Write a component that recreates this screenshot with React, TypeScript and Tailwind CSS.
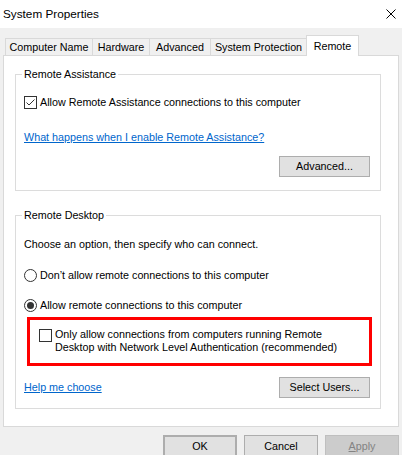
import React from "react";

function Checkbox({ checked }: { checked?: boolean }) {
  return (
    <span className="flex h-[13px] w-[13px] shrink-0 items-center justify-center border border-[#333333] bg-white">
      {checked && (
        <svg width="11" height="11" viewBox="0 0 11 11">
          <path d="M1.5 5.5 L4 8 L9.5 2.5" fill="none" stroke="#333333" strokeWidth="1" />
        </svg>
      )}
    </span>
  );
}

function Radio({ checked }: { checked?: boolean }) {
  return (
    <span className="flex h-[13px] w-[13px] shrink-0 items-center justify-center rounded-full border border-[#333333] bg-white">
      {checked && <span className="h-[7px] w-[7px] rounded-full bg-[#333333]" />}
    </span>
  );
}

function GroupBox({
  label,
  className,
  children,
}: {
  label: string;
  className: string;
  children: React.ReactNode;
}) {
  return (
    <div className={`relative ml-[11px] flex w-[366px] flex-col border border-[#dcdcdc] pl-[8px] ${className}`}>
      <span className="absolute -top-[7px] left-[6px] bg-white px-[2px] leading-[13px]">{label}</span>
      {children}
    </div>
  );
}

function Button({ children, className = "" }: { children: React.ReactNode; className?: string }) {
  return (
    <button
      className={`flex items-center justify-center border border-[#adadad] bg-[#e1e1e1] leading-[13px] text-black ${className}`}
    >
      {children}
    </button>
  );
}

const tabs = [
  { name: "Computer Name", w: "w-[88px]" },
  { name: "Hardware", w: "w-[58px]" },
  { name: "Advanced", w: "w-[62px]" },
  { name: "System Protection", w: "w-[97px]" },
];

export default function App() {
  return (
    <div className="flex h-[455px] w-[402px] flex-col overflow-hidden bg-[#f0f0f0] font-['Liberation_Sans',Arial,sans-serif] text-[10.75px] text-black">
      {/* Title bar */}
      <div className="flex h-[28px] shrink-0 items-center justify-between bg-white pl-[3px] pr-[6px]">
        <span className="text-[11.75px] leading-[14px]">System Properties</span>
        <svg width="10" height="10" viewBox="0 0 10 10">
          <path d="M0.5 0.5 L9.5 9.5 M9.5 0.5 L0.5 9.5" stroke="#000" strokeWidth="1" />
        </svg>
      </div>

      {/* Tabs */}
      <div className="flex h-[27px] shrink-0 items-end pl-[5px]">
        {tabs.map((t, i) => (
          <div
            key={t.name}
            className={`flex h-[17px] items-center justify-center border border-b-0 border-[#d9d9d9] bg-[#f0f0f0] leading-[13px] ${t.w} ${i > 0 ? "-ml-px" : ""}`}
          >
            {t.name}
          </div>
        ))}
        <div className="relative z-10 -mb-px -ml-px flex h-[21px] w-[53px] items-center justify-center border border-b-0 border-[#d9d9d9] bg-white leading-[13px]">
          Remote
        </div>
      </div>

      {/* Panel */}
      <div className="ml-[3px] flex h-[372px] w-[396px] shrink-0 flex-col border border-[#d9d9d9] bg-white">
        <GroupBox label="Remote Assistance" className="mt-[18px] h-[117px]">
          <div className="mt-[21px] flex h-[13px] items-center gap-[3px]">
            <Checkbox checked />
            <span className="leading-[13px]">Allow Remote Assistance connections to this computer</span>
          </div>
          <span className="mt-[22px] self-start leading-[13px] text-[#0066cc] underline">
            What happens when I enable Remote Assistance?
          </span>
          <Button className="mr-[10px] mt-[12px] h-[21px] w-[91px] self-end">Advanced...</Button>
        </GroupBox>

        <GroupBox label="Remote Desktop" className="mt-[24px] h-[194px]">
          <span className="mt-[22px] leading-[13px]">Choose an option, then specify who can connect.</span>
          <div className="mt-[18px] flex h-[13px] items-center gap-[3px]">
            <Radio />
            <span className="leading-[13px]">Don’t allow remote connections to this computer</span>
          </div>
          <div className="mt-[17px] flex h-[13px] items-center gap-[3px]">
            <Radio checked />
            <span className="leading-[13px]">Allow remote connections to this computer</span>
          </div>
          <div className="ml-[3px] mt-[5px] flex h-[49px] w-[345px] gap-[3px] border-[3px] border-[#ff0000] pl-[9px] pt-[8px]">
            <div className="mt-[1px]">
              <Checkbox />
            </div>
            <span className="whitespace-nowrap leading-[13px]">
              Only allow connections from computers running Remote
              <br />
              Desktop with Network Level Authentication (recommended)
            </span>
          </div>
          <div className="mt-[11px] flex items-center justify-between pr-[10px]">
            <span className="leading-[13px] text-[#0066cc] underline">Help me choose</span>
            <Button className="h-[21px] w-[91px]">Select Users...</Button>
          </div>
        </GroupBox>
      </div>

      {/* Dialog buttons */}
      <div className="mt-[8px] flex shrink-0 justify-end gap-[7px] pr-[3px]">
        <Button className="h-[23px] w-[74px] border-2 border-[#0078d7]">OK</Button>
        <Button className="h-[23px] w-[74px]">Cancel</Button>
        <button className="flex h-[23px] w-[74px] items-center justify-center border border-[#bfbfbf] bg-[#cccccc] leading-[13px] text-[#838383]">
          <span>
            <span className="underline">A</span>pply
          </span>
        </button>
      </div>
    </div>
  );
}
